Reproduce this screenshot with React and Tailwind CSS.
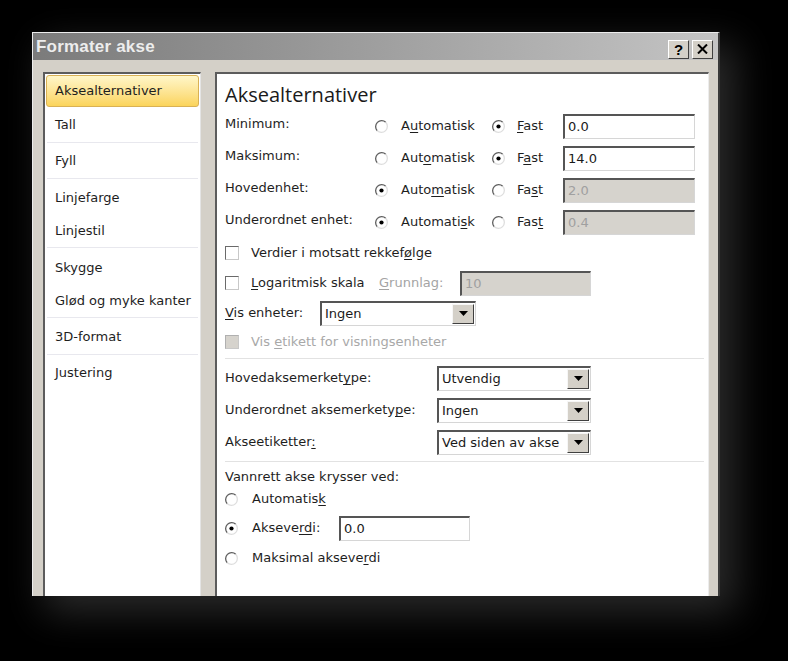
import React from "react";

function Radio({ checked }) {
  return (
    <svg width="13" height="13" viewBox="0 0 13 13" className="shrink-0">
      <circle cx="6.5" cy="6.5" r="6" fill="#fff" />
      <path d="M 2.26 10.74 A 6 6 0 0 1 10.74 2.26" stroke="#5e5e5e" strokeWidth="1.3" fill="none" />
      <path d="M 10.74 2.26 A 6 6 0 0 1 2.26 10.74" stroke="#dedede" strokeWidth="1.3" fill="none" />
      {checked && <circle cx="6.5" cy="6.5" r="2.1" fill="#000" />}
    </svg>
  );
}

function Check({ disabled }) {
  return (
    <span
      className={`block shrink-0 w-[14px] h-[14px] border border-t-[#6a6a6a] border-l-[#6a6a6a] border-r-[#c8c8c8] border-b-[#c8c8c8] ${
        disabled ? "bg-[#d6d3cd] border-t-[#b0b0b0] border-l-[#b0b0b0]" : "bg-white"
      }`}
    />
  );
}

function Field({ value, disabled, w }) {
  return (
    <div
      className={`h-[25px] flex items-center pl-[3px] border-t-2 border-l-2 border-r border-b border-t-[#555555] border-l-[#555555] border-r-[#d6d6d6] border-b-[#d6d6d6] ${w} ${
        disabled ? "bg-[#d6d3cd] text-[#a0a0a0]" : "bg-white text-[#1a1a1a]"
      }`}
    >
      {value}
    </div>
  );
}

function Select({ value, w }) {
  return (
    <div
      className={`h-[25px] flex items-stretch border-t-2 border-l-2 border-r border-b border-t-[#555555] border-l-[#555555] border-r-[#d6d6d6] border-b-[#d6d6d6] bg-white ${w}`}
    >
      <div className="flex-1 flex items-center pl-[3px] whitespace-nowrap overflow-hidden text-[#1a1a1a]">{value}</div>
      <div className="w-[22px] my-[1px] mr-[1px] bg-[#d4d0c8] border border-t-[#f6f6f6] border-l-[#f6f6f6] border-r-[#404040] border-b-[#404040] flex items-center justify-center">
        <svg width="9" height="5" viewBox="0 0 9 5">
          <path d="M0 0 H9 L4.5 5 Z" fill="#000" />
        </svg>
      </div>
    </div>
  );
}

function U({ children }) {
  return <span className="underline underline-offset-2">{children}</span>;
}

function Sep() {
  return <div className="h-px bg-[#e2e2e2]" />;
}

const FIXED = [
  { label: "Minimum:", auto: false, a: <>A<U>u</U>tomatisk</>, f: <><U>F</U>ast</>, v: "0.0", dis: false },
  { label: "Maksimum:", auto: false, a: <>Aut<U>o</U>matisk</>, f: <>F<U>a</U>st</>, v: "14.0", dis: false },
  { label: "Hovedenhet:", auto: true, a: <>Auto<U>m</U>atisk</>, f: <>Fa<U>s</U>t</>, v: "2.0", dis: true },
  { label: "Underordnet enhet:", auto: true, a: <>Automati<U>s</U>k</>, f: <>Fas<U>t</U></>, v: "0.4", dis: true },
];

const GROUPS = [["Tall"], ["Fyll"], ["Linjefarge", "Linjestil"], ["Skygge", "Glød og myke kanter"], ["3D-format"], ["Justering"]];

export default function App() {
  return (
    <div className="w-[788px] h-[661px] bg-black overflow-hidden pt-[32px] pl-[32px] font-['DejaVu_Sans',sans-serif] text-[13px] text-[#1e1e1e]">
      <div className="w-[688px] h-[564px] overflow-hidden flex flex-col bg-[#d4d0c8] border-l border-t border-l-[#ececec] border-t-[#ececec] border-r-2 border-r-[#3a3a3a] shadow-[14px_14px_36px_2px_rgba(70,70,70,0.6)]">
        {/* Title bar */}
        <div className="h-[27px] shrink-0 flex items-center justify-between bg-gradient-to-r from-[#7b7b7b] to-[#c4c4c4] pl-[3px] pr-[5px]">
          <span className="font-['Liberation_Sans',sans-serif] font-bold text-[17px] text-[#ededed] tracking-[0.2px]">Formater akse</span>
          <div className="flex gap-[3px] pt-[5px]">
            <div className="w-[21px] h-[19px] bg-[#d4d0c8] border border-t-white border-l-white border-r-[#404040] border-b-[#404040] flex items-center justify-center font-['Liberation_Sans',sans-serif] font-bold text-[15px] text-black leading-none">?</div>
            <div className="w-[21px] h-[19px] bg-[#d4d0c8] border border-t-white border-l-white border-r-[#404040] border-b-[#404040] flex items-center justify-center">
              <svg width="11" height="10" viewBox="0 0 11 10">
                <path d="M1 0.5 L10 9.5 M10 0.5 L1 9.5" stroke="#000" strokeWidth="2" />
              </svg>
            </div>
          </div>
        </div>

        {/* Body */}
        <div className="flex-1 flex pt-[12px] pl-[10px] pr-[9px]">
          {/* Left list */}
          <div className="w-[158px] shrink-0 bg-white border-t-2 border-l-2 border-r border-t-[#5c5c5c] border-l-[#5c5c5c] border-r-[#e4e4e4] flex flex-col px-[1px]">
            <div className="h-[33px] pt-[1px]">
              <div className="h-[32px] flex items-center pl-[8px] rounded-[3px] border border-[#d9b154] bg-gradient-to-b from-[#fff6c8] to-[#fbd45a]">
                Aksealternativer
              </div>
            </div>
            {GROUPS.map((g, i) => (
              <div key={i} className={`flex flex-col ${g.length > 1 ? "pt-[2px] pb-[1px]" : ""}`}>
                {g.map((t) => (
                  <div key={t} className={`${g.length > 1 ? "h-[33px]" : "h-[35px]"} flex items-center pl-[9px]`}>{t}</div>
                ))}
                {i < GROUPS.length - 1 && <div className="h-px mx-[1px] bg-[#e8e8ee]" />}
              </div>
            ))}
          </div>

          <div className="w-[14px] shrink-0" />

          {/* Right panel */}
          <div className="flex-1 bg-white border-t-2 border-l-2 border-r border-t-[#5c5c5c] border-l-[#5c5c5c] border-r-[#ececec] pl-[8px] pr-[4px] pt-[7px] flex flex-col">
            <div className="h-[29px] font-['Open_Sans',sans-serif] text-[20px] leading-[27px] text-[#1a1a1a]">Aksealternativer</div>

            {FIXED.map((r) => (
              <div key={r.label} className="h-[32px] flex items-center">
                <span className="w-[150px] mb-[5px]">{r.label}</span>
                <Radio checked={r.auto} />
                <span className="ml-[13px] w-[91px]">{r.a}</span>
                <Radio checked={!r.auto} />
                <span className="ml-[12px] w-[46px]">{r.f}</span>
                <Field value={r.v} disabled={r.dis} w="w-[132px]" />
              </div>
            ))}

            <div className="h-[30px] flex items-center">
              <Check />
              <span className="ml-[12px]">Verdier i motsatt rekkef<U>ø</U>lge</span>
            </div>
            <div className="h-[30px] flex items-center">
              <Check />
              <span className="ml-[12px] w-[128px]"><U>L</U>ogaritmisk skala</span>
              <span className="w-[81px] text-[#a4a4a4]"><U>G</U>runnlag:</span>
              <Field value="10" disabled w="w-[131px]" />
            </div>
            <div className="h-[30px] flex items-center">
              <span className="w-[95px]"><U>V</U>is enheter:</span>
              <Select value="Ingen" w="w-[156px]" />
            </div>
            <div className="h-[28px] flex items-center">
              <Check disabled />
              <span className="ml-[12px] text-[#a8a8a8]">Vis <U>e</U>tikett for visningsenheter</span>
            </div>
            <div className="mt-[2px]">
              <Sep />
            </div>

            <div className="mt-[3px] h-[32px] flex items-center">
              <span className="w-[212px]">Hovedaksemerket<U>y</U>pe:</span>
              <Select value="Utvendig" w="w-[154px]" />
            </div>
            <div className="h-[32px] flex items-center">
              <span className="w-[212px]">Underordnet aksemerkety<U>p</U>e:</span>
              <Select value="Ingen" w="w-[154px]" />
            </div>
            <div className="h-[32px] flex items-center">
              <span className="w-[212px]">Akseetiketter<U>:</U></span>
              <Select value="Ved siden av akse" w="w-[154px]" />
            </div>
            <div className="mt-[3px]">
              <Sep />
            </div>

            <div className="mt-[6px] h-[18px] flex items-center">Vannrett akse krysser ved:</div>
            <div className="h-[26px] flex items-center">
              <Radio />
              <span className="ml-[14px]">Automatis<U>k</U></span>
            </div>
            <div className="h-[32px] flex items-center">
              <Radio checked />
              <span className="ml-[14px] w-[87px]">Akseve<U>r</U><U>d</U>i:</span>
              <Field value="0.0" w="w-[131px]" />
            </div>
            <div className="h-[28px] flex items-center">
              <Radio />
              <span className="ml-[14px]">Maksimal akseve<U>r</U>di</span>
            </div>
          </div>
        </div>
      </div>
    </div>
  );
}
